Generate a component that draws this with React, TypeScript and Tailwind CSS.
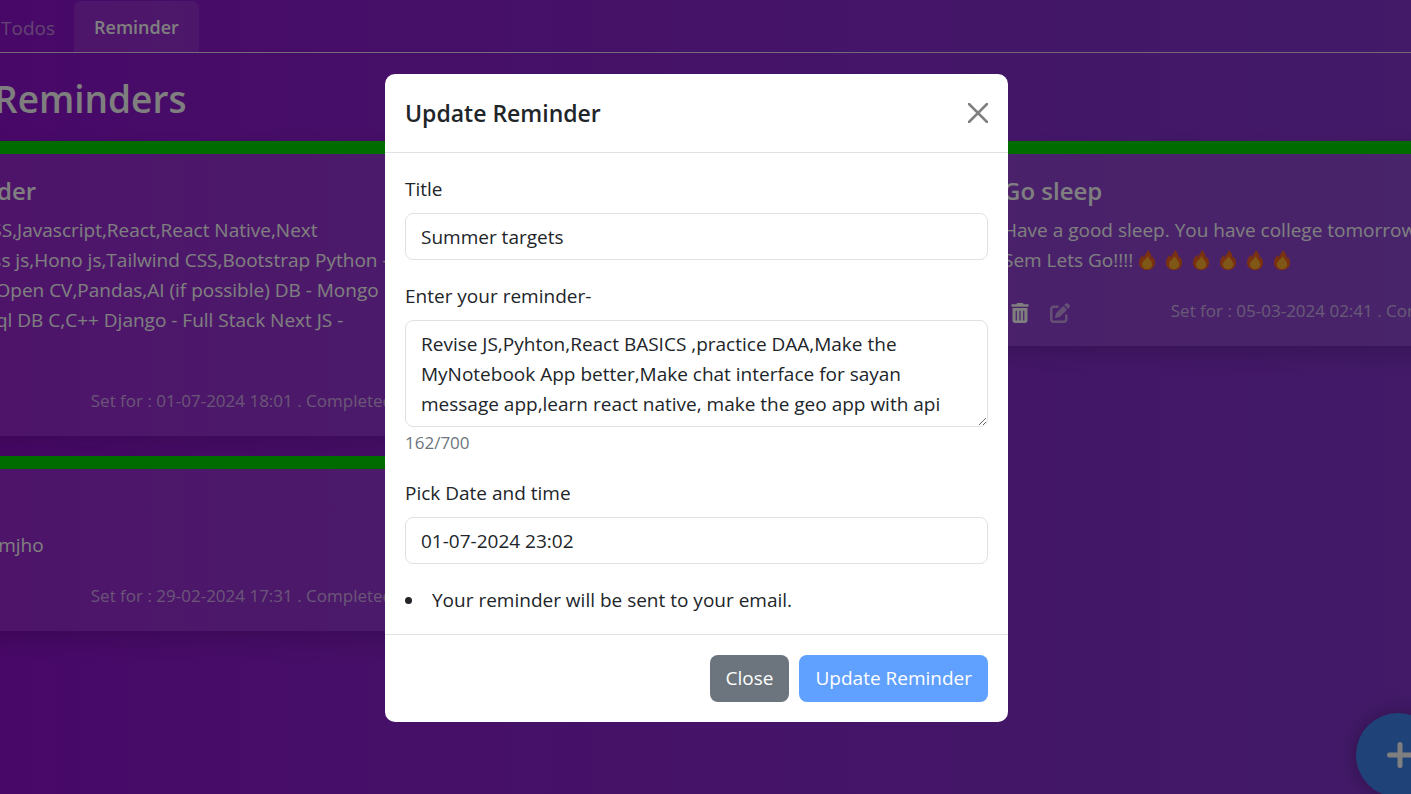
import { useState } from "react";
import { FaPenToSquare, FaTrashCan } from "react-icons/fa6";

type Reminder = {
  title: string;
  lines: string[];
  flames?: number;
  setFor: string;
};

const reminders: Reminder[] = [
  {
    title: "Reminder",
    lines: [
      "HTML,CSS,Javascript,React,React Native,Next",
      "js,Express js,Hono js,Tailwind CSS,Bootstrap Python -",
      "ML,NLP,Open CV,Pandas,AI (if possible) DB - Mongo",
      "DB, MySql DB C,C++ Django - Full Stack Next JS -",
      "\u00a0",
    ],
    setFor: "01-07-2024 18:01",
  },
  {
    title: "Summer targets",
    lines: ["Revise JS,Pyhton,React BASICS ,practice DAA"],
    setFor: "01-07-2024 23:02",
  },
  {
    title: "Go sleep",
    lines: ["Have a good sleep. You have college tomorrow. 4th", "Sem Lets Go!!!!"],
    flames: 6,
    setFor: "05-03-2024 02:41",
  },
  {
    title: "Test",
    lines: ["Hello, samjho"],
    setFor: "29-02-2024 17:31",
  },
];

function Flame() {
  return (
    <svg viewBox="0 0 16 20" className="h-5 w-4 shrink-0" aria-hidden="true">
      <path
        d="M8.6 0C8.8 3 5.4 4.3 5 7.5C4.3 6.9 3.9 6 3.9 5C1.5 7.2 0 9.8 0 12.7C0 17 3.5 20 8 20C12.5 20 16 17 16 12.7C16 10 14.8 8 13.7 6.5C13.5 7.4 13.1 8 12.5 8.4C12.7 5 11.4 1.9 8.6 0Z"
        fill="#f4621e"
      />
      <path
        d="M8.5 6C8.5 8.5 3 10.5 3 14.5C3 17.200 5.200 19.200 8 19.200C10.900 19.200 13.200 17.200 13.200 14.500C13.200 11.200 10.200 9.200 8.500 6Z"
        fill="#ffb02e"
      />
    </svg>
  );
}

function Card({ item }: { item: Reminder }) {
  return (
    <article className="border-t-[13px] border-[#00d800] bg-white/10 p-5 shadow-[0_10px_20px_rgba(0,0,0,0.15)]">
      <h2 className="mb-2 text-[24px] leading-[33px] font-semibold">{item.title}</h2>
      <div className="text-[19px] leading-[30px] whitespace-nowrap">
        {item.lines.map((line, i) => (
          <p key={i} className="flex items-center">
            {line}
            {item.flames && i === item.lines.length - 1 ? (
              <span className="ml-1.5 flex gap-[11px]">
                {Array.from({ length: item.flames }, (_, n) => (
                  <Flame key={n} />
                ))}
              </span>
            ) : null}
          </p>
        ))}
      </div>
      <div className="mt-[21px] flex items-center gap-5 whitespace-nowrap">
        <button type="button" aria-label="Delete" className="pt-1 pl-[7px] text-white">
          <FaTrashCan className="size-5" />
        </button>
        <button type="button" aria-label="Edit" className="pt-1 text-white/50">
          <FaPenToSquare className="size-5" />
        </button>
        <small className="ml-auto text-[17px] leading-[30px] text-white/60">
          Set for : {item.setFor} . Completed
        </small>
      </div>
    </article>
  );
}

const field =
  "block w-full rounded-lg border border-[#dee2e6] bg-white px-[15px] pt-2 pb-[7px] text-[19px] leading-[30px] text-[#212529] outline-none";

export default function App() {
  const [title, setTitle] = useState("Summer targets");
  const [date, setDate] = useState("01-07-2024 23:02");
  const [text, setText] = useState(
    "Revise JS,Pyhton,React BASICS ,practice DAA,Make the MyNotebook App better,Make chat interface for sayan message app,learn react native, make the geo app with api and finish it"
  );

  return (
    <div className="relative h-screen overflow-hidden bg-linear-to-r from-[#9010d0] to-[#8434d0] font-['Open_Sans','Noto_Sans',sans-serif] text-white">
      <nav className="flex h-[53px] items-end border-b border-white/80 leading-[30px]">
        <a href="#todos" className="px-px pb-[9px] text-[19px] text-white/50">
          Todos
        </a>
        <a
          href="#reminder"
          className="ml-[18px] rounded-t-lg bg-white/10 px-5 pt-[11px] pb-[10px] text-[18px] font-semibold"
        >
          Reminder
        </a>
      </nav>
      <h1 className="-ml-1.5 pt-[18px] pb-[14px] text-[37px] leading-[56px] font-semibold">Reminders</h1>
      <main className="-mr-[82px] -ml-[97px] grid grid-cols-3 items-start gap-x-[30px] gap-y-5">
        {reminders.map((item) => (
          <Card key={item.title} item={item} />
        ))}
      </main>
      <button
        type="button"
        aria-label="Add reminder"
        className="absolute -right-[29px] -bottom-[3px] flex size-[84px] items-center justify-center rounded-full bg-[#3e84f0] shadow-[0_0_20px_rgba(0,0,0,0.3)]"
      >
        <svg viewBox="0 0 26 26" className="ml-1 size-[26px]" aria-hidden="true">
          <path d="M13 2.500V23.500M2.500 13H23.500" stroke="currentColor" strokeWidth="5" strokeLinecap="round" />
        </svg>
      </button>

      <div className="absolute inset-0 flex items-start justify-center bg-black/50 pt-[74px] pr-[18px]">
        <div
          role="dialog"
          aria-labelledby="dialog-title"
          className="w-full max-w-[623px] rounded-[10px] bg-white text-[19px] leading-[30px] text-[#212529]"
        >
          <header className="flex items-center justify-between border-b border-[#dee2e6] p-5">
            <h2 id="dialog-title" className="text-[23px] leading-[38px] font-semibold">
              Update Reminder
            </h2>
            <button type="button" aria-label="Dismiss" className="text-[#7f7f7f]">
              <svg viewBox="0 0 20 20" className="size-5" aria-hidden="true">
                <path d="M1 1L19 19M19 1L1 19" stroke="currentColor" strokeWidth="2.5" strokeLinecap="round" />
              </svg>
            </button>
          </header>
          <form className="px-5 pt-[21px] pb-[19px]">
            <label htmlFor="title" className="mb-[9px] block">
              Title
            </label>
            <input id="title" value={title} onChange={(e) => setTitle(e.target.value)} className={field} />
            <label htmlFor="text" className="mt-[21px] mb-[9px] block">
              Enter your reminder-
            </label>
            <textarea
              id="text"
              rows={3}
              value={text}
              onChange={(e) => setText(e.target.value)}
              className={`${field} overflow-hidden`}
            />
            <small className="mt-0.5 block text-[17px] leading-[28px] text-[#6c757d]">162/700</small>
            <label htmlFor="date" className="mt-[21px] mb-[9px] block">
              Pick Date and time
            </label>
            <input id="date" value={date} onChange={(e) => setDate(e.target.value)} className={field} />
            <ul className="mt-[21px] list-inside list-disc">
              <li>Your reminder will be sent to your email.</li>
            </ul>
          </form>
          <footer className="flex justify-end gap-[10px] border-t border-[#dee2e6] p-5 leading-[31px] text-white">
            <button type="button" className="rounded-lg bg-[#6c757d] px-4 py-2">
              Close
            </button>
            <button type="button" className="rounded-lg bg-[#60a0ff] px-4 py-2">
              Update Reminder
            </button>
          </footer>
        </div>
      </div>
    </div>
  );
}
